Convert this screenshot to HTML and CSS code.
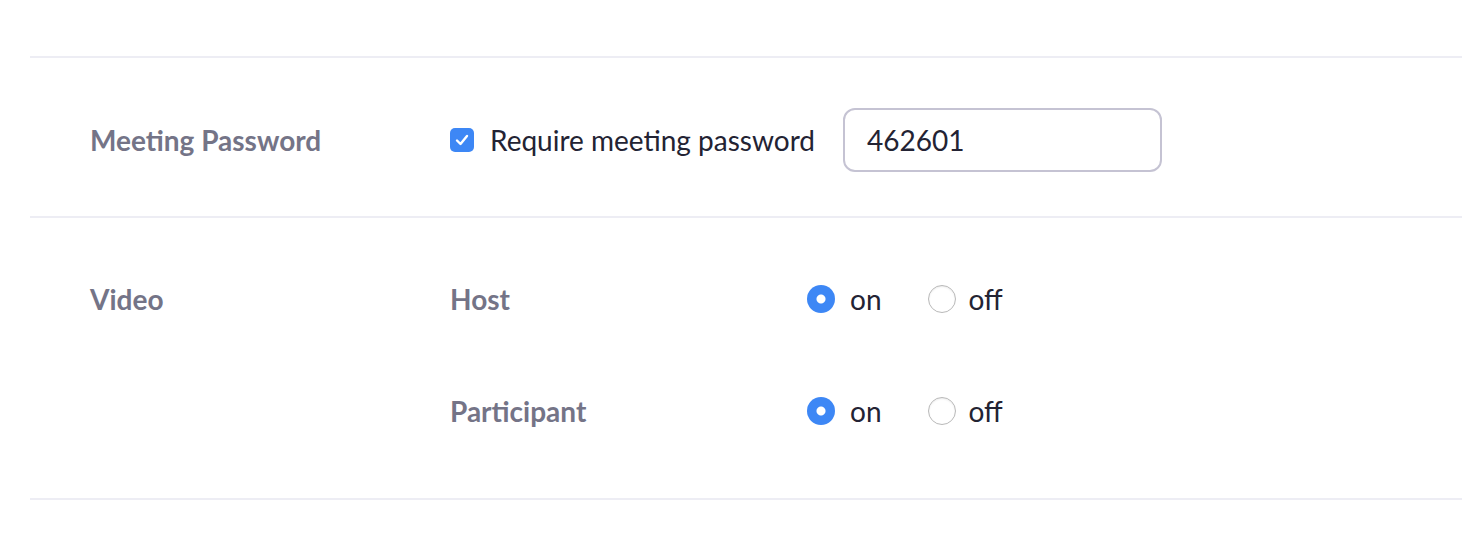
FILE: index.html
```html
<!DOCTYPE html>
<html>
<head>
<meta charset="utf-8">
<link rel="stylesheet" href="styles.css">
</head>
<body>
<div class="settings">
  <div class="row row-password">
    <div class="label">Meeting Password</div>
    <div class="control">
      <label class="check">
        <span class="checkbox">
          <svg width="14" height="12" viewBox="0 0 14 12"><path d="M2 6.5 L5.5 10 L12 2" fill="none" stroke="#fff" stroke-width="2.4" stroke-linecap="round" stroke-linejoin="round"/></svg>
        </span>
        <span class="check-text">Require meeting password</span>
      </label>
      <div class="input">462601</div>
    </div>
  </div>
  <div class="row row-video">
    <div class="label">Video</div>
    <div class="sub">
      <div class="subrow">
        <div class="sublabel">Host</div>
        <div class="radios">
          <span class="radio-item"><span class="radio on"></span><span class="radio-text">on</span></span>
          <span class="radio-item"><span class="radio"></span><span class="radio-text">off</span></span>
        </div>
      </div>
      <div class="subrow">
        <div class="sublabel">Participant</div>
        <div class="radios">
          <span class="radio-item"><span class="radio on"></span><span class="radio-text">on</span></span>
          <span class="radio-item"><span class="radio"></span><span class="radio-text">off</span></span>
        </div>
      </div>
    </div>
  </div>
</div>
</body>
</html>
```

FILE: styles.css
```css
html, body {
  margin: 0;
  padding: 0;
  background: #fff;
}
body {
  font-family: Lato, "Noto Sans", sans-serif;
  color: #232333;
  padding-top: 56px;
}
.settings {
  margin-left: 30px;
  border-bottom: 2px solid #ededf4;
}
.row {
  display: flex;
  border-top: 2px solid #ededf4;
}
.label {
  width: 360px;
  padding-left: 60px;
  font-size: 28px;
  font-weight: 700;
  color: #747487;
}
.row-password {
  align-items: center;
  padding: 50px 0 44px;
}
.control {
  display: flex;
  align-items: center;
}
.check {
  display: flex;
  align-items: center;
}
.checkbox {
  width: 24px;
  height: 24px;
  border-radius: 5px;
  background: #3d87f5;
  display: flex;
  align-items: center;
  justify-content: center;
}
.check-text {
  margin-left: 16px;
  font-size: 28px;
}
.input {
  margin-left: 28px;
  width: 271px;
  height: 60px;
  border: 2px solid #c5c3d3;
  border-radius: 12px;
  padding: 0 22px;
  display: flex;
  align-items: center;
  font-size: 28px;
}
.row-video {
  padding: 53px 0 59px;
}
.row-video .label {
  line-height: 56px;
}
.sub {
  display: flex;
  flex-direction: column;
  gap: 56px;
}
.subrow {
  display: flex;
  align-items: center;
  height: 56px;
}
.sublabel {
  width: 357px;
  font-size: 28px;
  font-weight: 700;
  color: #747487;
}
.radios {
  display: flex;
  align-items: center;
  gap: 46px;
}
.radio-item {
  display: flex;
  align-items: center;
}
.radio {
  width: 26px;
  height: 26px;
  border-radius: 50%;
  border: 1px solid #b9b9b9;
  box-sizing: content-box;
  background: #fff;
  box-shadow: inset 0 1px 2px rgba(0,0,0,0.08);
}
.radio.on {
  width: 28px;
  height: 28px;
  border: none;
  background: radial-gradient(circle, #fff 0 4px, #3d87f5 5px);
  box-shadow: none;
}
.radio-text {
  margin-left: 15px;
  font-size: 28px;
}
.radio-item + .radio-item .radio-text {
  margin-left: 13px;
}
```
